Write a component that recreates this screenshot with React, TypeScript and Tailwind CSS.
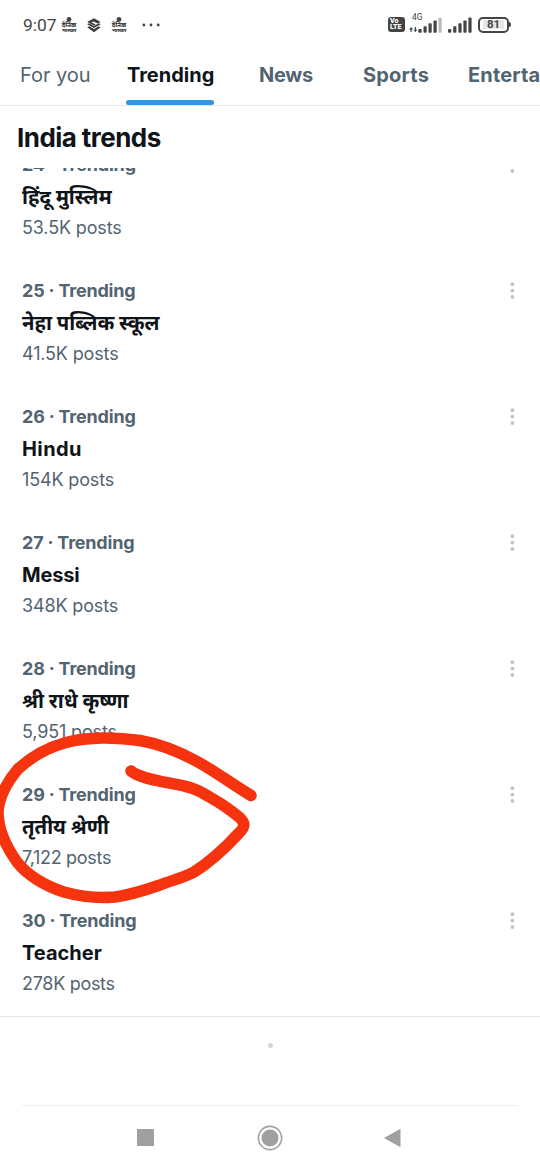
interface ITrend {
  rank: number;
  title: string;
  posts: string;
  titleClass?: string;
  postsClass?: string;
}

interface ITab {
  name: string;
  className: string;
  active?: boolean;
}

const tabs: ITab[] = [
  { name: "For you", className: "w-[71px] font-normal tracking-[-0.05px] text-[#536471]" },
  { name: "Trending", className: "ml-9 w-[87px] font-bold tracking-[0px] text-[#0f1419]", active: true },
  { name: "News", className: "ml-[45px] w-[54px] font-bold tracking-[-0.3px] text-[#536471]" },
  { name: "Sports", className: "ml-[50px] w-[67px] font-bold tracking-[0.2px] text-[#536471]" },
  { name: "Entertainment", className: "ml-[38px] w-[150px] font-bold tracking-[0.15px] text-[#536471]" },
];

const trends: ITrend[] = [
  { rank: 24, title: "हिंदू मुस्लिम", posts: "53.5K posts", titleClass: "text-[20.3px]" },
  { rank: 25, title: "नेहा पब्लिक स्कूल", posts: "41.5K posts", titleClass: "text-[20.3px]" },
  { rank: 26, title: "Hindu", posts: "154K posts", titleClass: "text-[20px] tracking-[0.4px]" },
  { rank: 27, title: "Messi", posts: "348K posts", titleClass: "text-[20px] tracking-[-0.2px]" },
  { rank: 28, title: "श्री राधे कृष्णा", posts: "5,951 posts", titleClass: "text-[20.3px]" },
  {
    rank: 29,
    title: "तृतीय श्रेणी",
    posts: "7,122 posts",
    titleClass: "text-[20.3px]",
    postsClass: "tracking-[-0.3px]",
  },
  {
    rank: 30,
    title: "Teacher",
    posts: "278K posts",
    titleClass: "text-[20px]",
    postsClass: "tracking-[-0.3px]",
  },
];

function NewsIcon() {
  return (
    <div className="flex h-4 w-4 flex-col items-center text-[#444]">
      <svg className="shrink-0" width="16" height="5" viewBox="0 0 16 5">
        <circle cx="8" cy="2.4" r="2.4" fill="#444" />
      </svg>
      <span className="text-[6px] leading-[6px] font-black">दैनिक</span>
      <span className="text-[5px] leading-[5px] font-black">भास्कर</span>
    </div>
  );
}

function LayersIcon() {
  return (
    <svg width="16" height="15" viewBox="0 0 16 15" fill="#3c3c3c">
      <path d="M8 .3 14.6 3.9 11.7 5.5 7.4 3.4 5.5 4.4 9.8 6.5 8 7.5 1.2 3.9Z" />
      <path d="M1.2 6.2 3 5.3 8 8 12.9 5.3 14.7 6.2 8 10Z" />
      <path d="M1.2 9.3 3.2 8.2 8 10.9 12.8 8.2 14.7 9.3 8 14.2Z" />
    </svg>
  );
}

function StatusBar() {
  return (
    <div className="flex h-[50px] shrink-0 items-center justify-between pr-[27px] pl-[23px] text-[#444]">
      <div className="flex items-center">
        <span className="w-[38px] font-[Roboto] text-[17.4px] leading-5 whitespace-nowrap">9:07</span>
        <NewsIcon />
        <div className="ml-[9px]">
          <LayersIcon />
        </div>
        <div className="ml-[9px]">
          <NewsIcon />
        </div>
        <svg className="ml-[15px]" width="18" height="4" viewBox="0 0 18 4" fill="#444">
          <circle cx="1.9" cy="2" r="1.4" />
          <circle cx="9" cy="2" r="1.4" />
          <circle cx="16.2" cy="2" r="1.4" />
        </svg>
      </div>
      <div className="-mt-px flex items-center">
        <div className="flex h-[15px] w-[17px] flex-col justify-center rounded-[3px] bg-[#444] pl-[2px] font-[Roboto] text-[7px] leading-[7px] font-black text-white">
          <span>Vo</span>
          <span className="-mt-px">LTE</span>
        </div>
        <div className="ml-1 flex h-[19px] w-[33px] flex-col">
          <span className="-mt-[1px] pl-[3px] font-[Roboto] text-[8.5px] leading-[7px]">4G</span>
          <svg className="-mt-[4px] shrink-0" width="33" height="16" viewBox="0 0 33 16" fill="#444">
            <path d="M0 12.5 2.1 10 4.1 12.5H2.7V15H1.5V12.5ZM4.6 12.7H5.8V10H7V12.7H8.3L6.4 15.2Z" />
            <rect x="9.3" y="12" width="3.4" height="3.8" rx="1" />
            <rect x="14.5" y="9.3" width="3.2" height="6.5" rx=".8" />
            <rect x="19.5" y="6.3" width="3.2" height="9.5" rx=".8" />
            <rect x="24.5" y="3.4" width="3.2" height="12.4" rx=".8" />
            <rect x="29.5" y=".8" width="3.2" height="15" rx=".8" fill="#bbb" />
          </svg>
        </div>
        <svg className="ml-[6px]" width="25" height="16" viewBox="0 0 25 16" fill="#444">
          <rect x="0" y="12" width="3.3" height="3.8" rx="1" />
          <rect x="5.2" y="9.3" width="3.2" height="6.5" rx=".8" />
          <rect x="10.4" y="6.3" width="3.2" height="9.5" rx=".8" />
          <rect x="15.4" y="3.4" width="3.2" height="12.4" rx=".8" />
          <rect x="20.4" y=".6" width="3.2" height="15.2" rx=".8" />
        </svg>
        <div className="ml-[5px] flex h-4 w-[31px] items-center justify-center rounded-[5px] border-2 border-[#444]">
          <span className="flex h-[9px] w-[21px] items-center justify-center bg-[#e6e6e6] pt-px font-[Roboto] text-[11.5px] font-bold">
            81
          </span>
        </div>
        <div className="mr-[2px] h-[5px] w-[2px] rounded-r bg-[#444]" />
      </div>
    </div>
  );
}

function Tabs() {
  return (
    <div className="flex h-14 shrink-0 overflow-hidden border-b border-[#e6eaec] pl-5">
      {tabs.map((tab) => (
        <div key={tab.name} className={`flex shrink-0 flex-col justify-between ${tab.className}`}>
          <span className="pt-[10px] text-[20px] leading-[30px] whitespace-nowrap">{tab.name}</span>
          {tab.active && <div className="-ml-px h-[5px] rounded-full bg-[#2e97e0]" />}
        </div>
      ))}
    </div>
  );
}

function MoreIcon() {
  return (
    <svg className="mt-[6px]" width="6" height="20" viewBox="0 0 6 20" fill="#b9c7cf">
      <circle cx="3.4" cy="3.2" r="1.9" />
      <circle cx="3.4" cy="9.6" r="1.9" />
      <circle cx="3.4" cy="16" r="1.9" />
    </svg>
  );
}

function Trend({ item }: { item: ITrend }) {
  return (
    <div className="flex h-[126px] shrink-0 items-start justify-between pr-[25px] pl-[22px]">
      <div className="flex flex-col items-start whitespace-nowrap">
        <span className="text-[18px] leading-8 font-bold tracking-[-0.2px] text-[#536471]">
          {item.rank} · Trending
        </span>
        <span className={`leading-8 font-bold text-[#0f1419] ${item.titleClass}`}>{item.title}</span>
        <span className={`text-[18px] leading-[30px] text-[#536471] ${item.postsClass ?? "tracking-[-0.15px]"}`}>
          {item.posts}
        </span>
      </div>
      <MoreIcon />
    </div>
  );
}

function NavBar() {
  return (
    <div className="mx-[22px] flex h-[65px] items-center justify-between border-t border-[#efefef] pr-[117px] pb-px pl-[115px]">
      <div className="h-[17px] w-[17px] bg-[#a0a0a0]" />
      <svg className="ml-[2px]" width="26" height="26" viewBox="0 0 26 26">
        <circle cx="13" cy="13" r="11.6" fill="none" stroke="#a0a0a0" strokeWidth="1.6" />
        <circle cx="13" cy="13" r="8.5" fill="#a0a0a0" />
      </svg>
      <svg width="17" height="20" viewBox="0 0 17 20">
        <path d="M0 10 16.5.7V19.3Z" fill="#a0a0a0" />
      </svg>
    </div>
  );
}

export default function App() {
  return (
    <div className="relative flex h-[1170px] w-[540px] flex-col overflow-hidden bg-white font-[Inter,'Noto_Sans',sans-serif]">
      <StatusBar />
      <Tabs />
      <h1 className="h-[62px] shrink-0 pt-[15px] pl-[17px] text-[26px] leading-[34px] font-bold tracking-[-0.55px] text-[#0f1419]">
        India trends
      </h1>
      <div className="flex h-[849px] shrink-0 flex-col overflow-hidden border-b border-[#e3e7e9]">
        <div className="-mt-[19px] flex flex-col">
          {trends.map((item) => (
            <Trend key={item.rank} item={item} />
          ))}
        </div>
      </div>
      <div className="flex h-[88px] shrink-0 justify-center pt-[26px]">
        <div className="h-[5px] w-[5px] rounded-full bg-[#cfd6d9]" />
      </div>
      <NavBar />
      {/* hand drawn ring around #29 */}
      <svg className="absolute top-[720px] left-0" width="270" height="200" viewBox="0 720 270 200" fill="none">
        <path
          d="M251 795.5C232 784 216 772 198 762C178 751 160 744 140 740.5C117 737 88 736.5 66 742.5C46 748 30 758 18 769C7 782 -1 797 -2 812C-2 832 7 848 17 862C27 875 45 886 64 892C80 896.5 97 898.5 115 897C130 895 147 889.500 160 885C173 880 184 877.500 194 872C212 861 227 846 239 833C245.5 826.5 245.5 823 239 817C229 809 222 804 213 799C202 792.500 196 788.500 184 786C168 782 142 780 131 771"
          stroke="#f5330f"
          strokeWidth="11.5"
          strokeLinecap="round"
          strokeLinejoin="round"
        />
      </svg>
    </div>
  );
}
